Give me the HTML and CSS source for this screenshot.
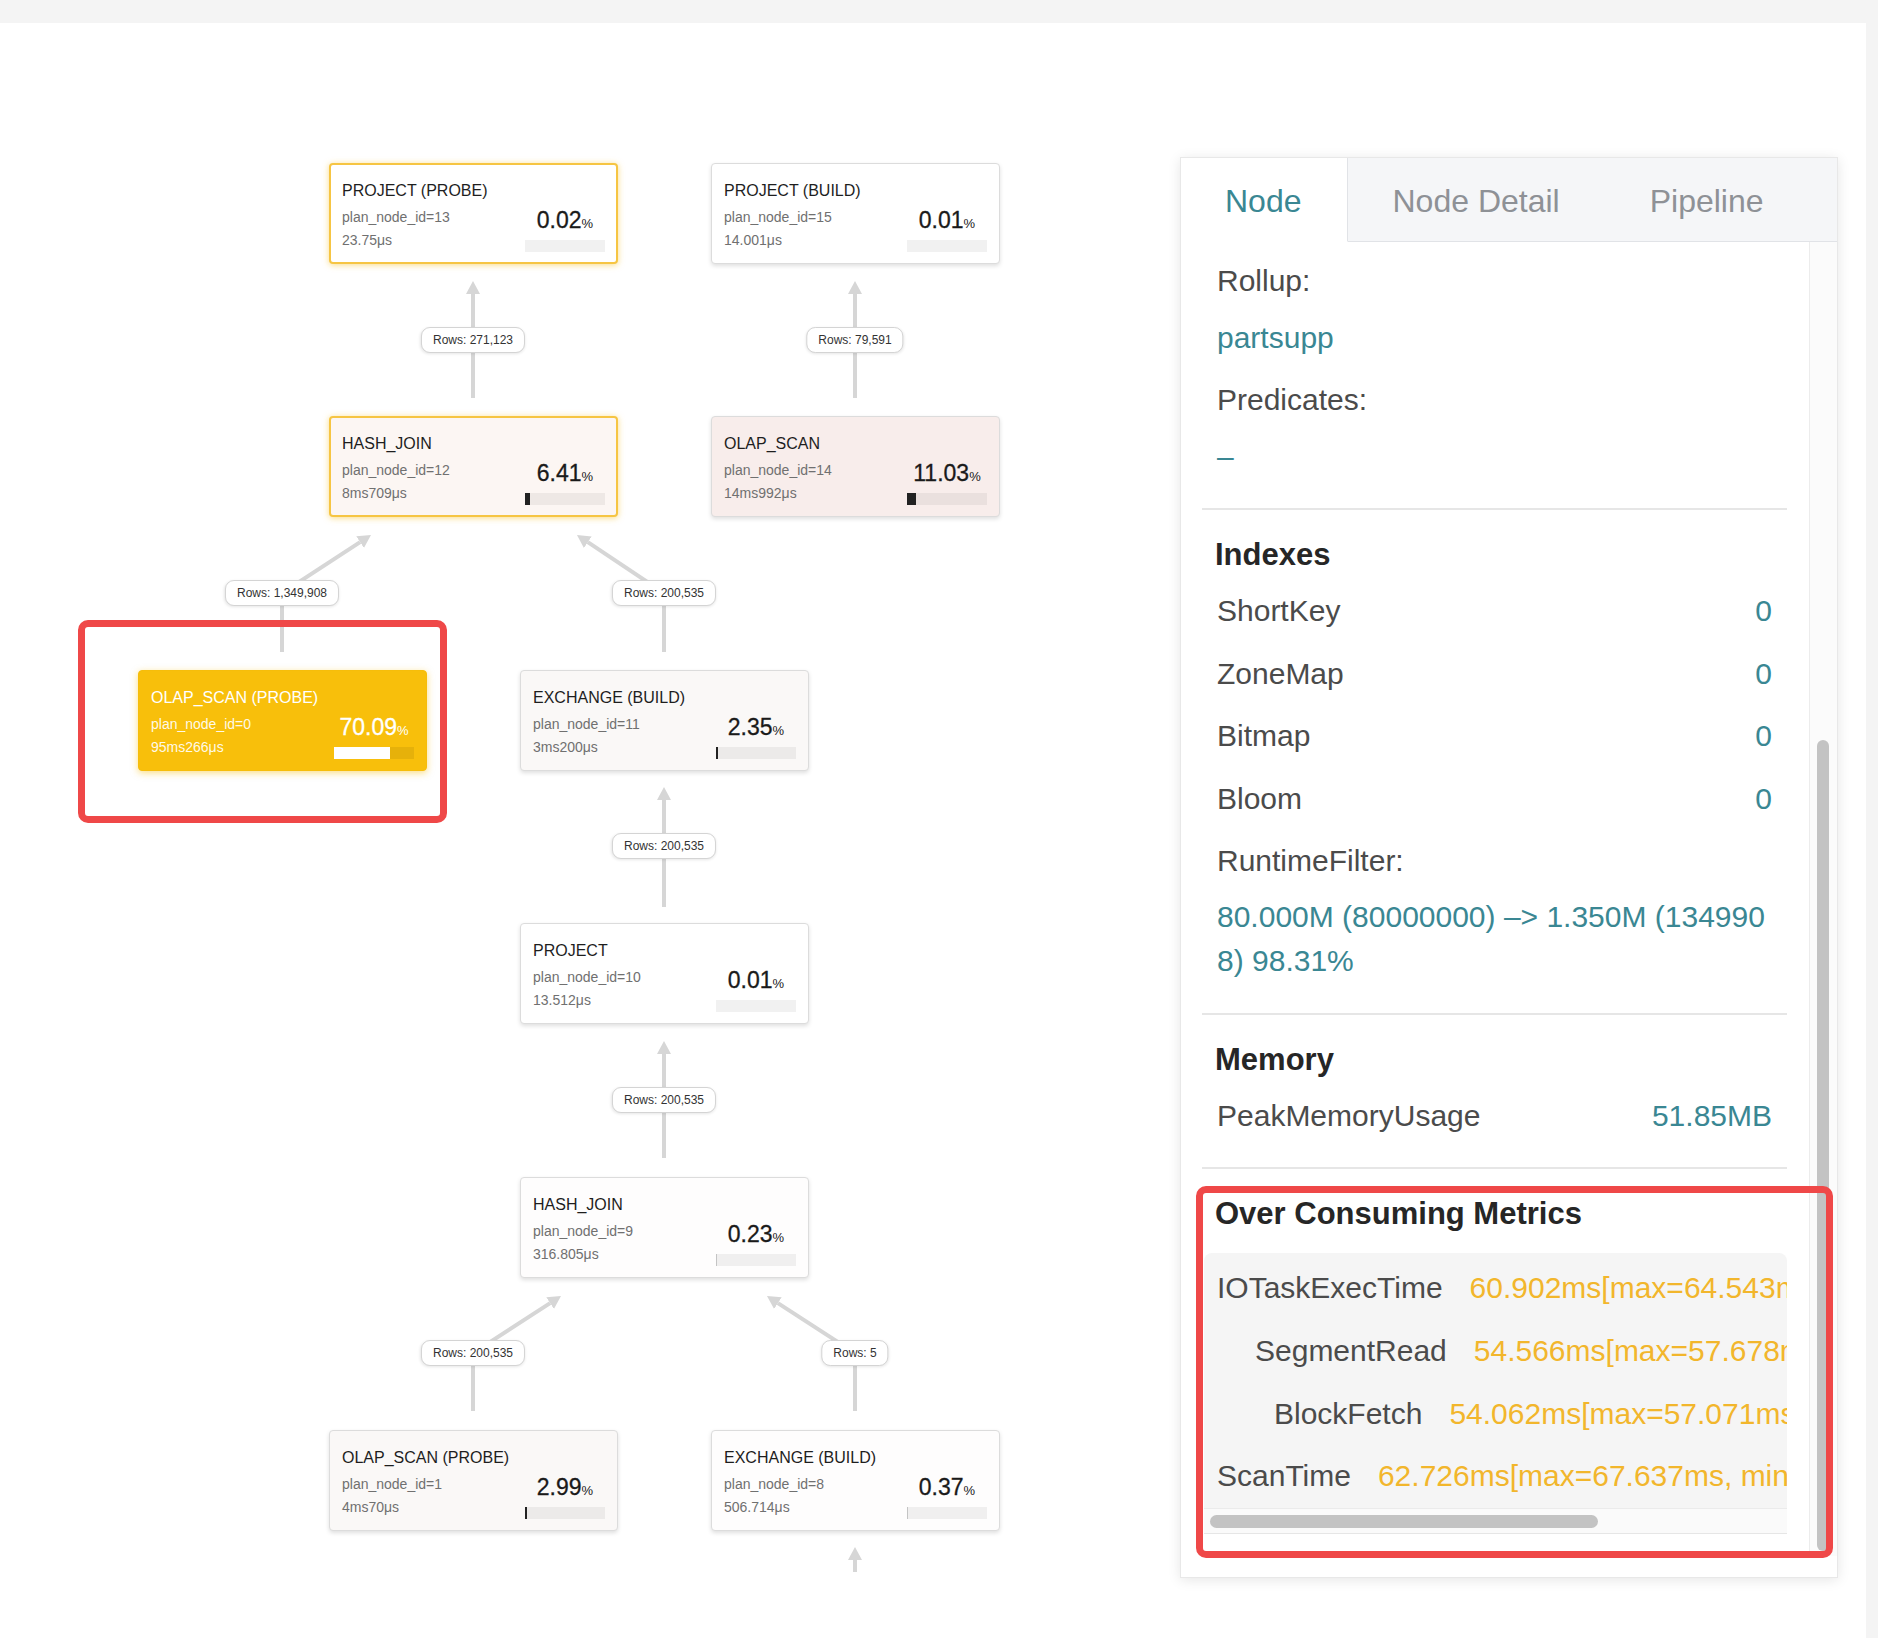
FILE: index.html
```html
<!DOCTYPE html>
<html>
<head>
<meta charset="utf-8">
<title>Profile</title>
<link rel="stylesheet" href="styles.css">
</head>
<body>
<div class="page">
  <div class="graph">
    <svg class="edges" width="1180" height="1615" viewBox="0 0 1180 1615">
      <defs>
        <marker id="arr" viewBox="0 0 13 14" refX="0" refY="7" markerWidth="13" markerHeight="14" markerUnits="userSpaceOnUse" orient="auto">
          <path d="M0,0 L13,7 L0,14 z" fill="#d6d6d6"/>
        </marker>
      </defs>
      <g fill="none" stroke="#d6d6d6" stroke-width="4" marker-end="url(#arr)">
        <path d="M473,375 L473,271"/>
        <path d="M855,375 L855,271"/>
        <path d="M282,629 L282,570 L360.1,519.1"/>
        <path d="M664,629 L664,570 L587.8,519.2"/>
        <path d="M664,884 L664,777"/>
        <path d="M664,1135 L664,1031"/>
        <path d="M473,1388 L473,1330 L550.1,1280.1"/>
        <path d="M855,1388 L855,1330 L777.9,1280.1"/>
        <path d="M855,1549 L855,1537"/>
      </g>
    </svg>

    <div class="elabel l1">Rows: 271,123</div>
    <div class="elabel l2">Rows: 79,591</div>
    <div class="elabel l3">Rows: 1,349,908</div>
    <div class="elabel l4">Rows: 200,535</div>
    <div class="elabel l5">Rows: 200,535</div>
    <div class="elabel l6">Rows: 200,535</div>
    <div class="elabel l7">Rows: 200,535</div>
    <div class="elabel l8">Rows: 5</div>

    <div class="node n13 hl">
      <div class="title">PROJECT (PROBE)</div>
      <div class="body">
        <div class="meta"><div>plan_node_id=13</div><div>23.75μs</div></div>
        <div class="stat"><div class="pct">0.02<span>%</span></div><div class="bar"></div></div>
      </div>
    </div>

    <div class="node n15">
      <div class="title">PROJECT (BUILD)</div>
      <div class="body">
        <div class="meta"><div>plan_node_id=15</div><div>14.001μs</div></div>
        <div class="stat"><div class="pct">0.01<span>%</span></div><div class="bar"></div></div>
      </div>
    </div>

    <div class="node n12 hl heat2">
      <div class="title">HASH_JOIN</div>
      <div class="body">
        <div class="meta"><div>plan_node_id=12</div><div>8ms709μs</div></div>
        <div class="stat"><div class="pct">6.41<span>%</span></div><div class="bar"><i style="width:6.41%"></i></div></div>
      </div>
    </div>

    <div class="node n14 heat3">
      <div class="title">OLAP_SCAN</div>
      <div class="body">
        <div class="meta"><div>plan_node_id=14</div><div>14ms992μs</div></div>
        <div class="stat"><div class="pct">11.03<span>%</span></div><div class="bar"><i style="width:11.03%"></i></div></div>
      </div>
    </div>

    <div class="node n0 hot">
      <div class="title">OLAP_SCAN (PROBE)</div>
      <div class="body">
        <div class="meta"><div>plan_node_id=0</div><div>95ms266μs</div></div>
        <div class="stat"><div class="pct">70.09<span>%</span></div><div class="bar"><i style="width:70.09%"></i></div></div>
      </div>
    </div>

    <div class="node n11 heat1">
      <div class="title">EXCHANGE (BUILD)</div>
      <div class="body">
        <div class="meta"><div>plan_node_id=11</div><div>3ms200μs</div></div>
        <div class="stat"><div class="pct">2.35<span>%</span></div><div class="bar"><i style="width:2.35%"></i></div></div>
      </div>
    </div>

    <div class="node n10">
      <div class="title">PROJECT</div>
      <div class="body">
        <div class="meta"><div>plan_node_id=10</div><div>13.512μs</div></div>
        <div class="stat"><div class="pct">0.01<span>%</span></div><div class="bar"></div></div>
      </div>
    </div>

    <div class="node n9 heat0">
      <div class="title">HASH_JOIN</div>
      <div class="body">
        <div class="meta"><div>plan_node_id=9</div><div>316.805μs</div></div>
        <div class="stat"><div class="pct">0.23<span>%</span></div><div class="bar"><i class="faint"></i></div></div>
      </div>
    </div>

    <div class="node n1 heat1">
      <div class="title">OLAP_SCAN (PROBE)</div>
      <div class="body">
        <div class="meta"><div>plan_node_id=1</div><div>4ms70μs</div></div>
        <div class="stat"><div class="pct">2.99<span>%</span></div><div class="bar"><i style="width:2.99%"></i></div></div>
      </div>
    </div>

    <div class="node n8 heat0">
      <div class="title">EXCHANGE (BUILD)</div>
      <div class="body">
        <div class="meta"><div>plan_node_id=8</div><div>506.714μs</div></div>
        <div class="stat"><div class="pct">0.37<span>%</span></div><div class="bar"><i class="faint"></i></div></div>
      </div>
    </div>

    <div class="redmark left-mark"></div>
  </div>

  <div class="panel">
    <div class="tabs">
      <div class="tab active">Node</div>
      <div class="tab">Node Detail</div>
      <div class="tab">Pipeline</div>
      <div class="tab-fill"></div>
    </div>
    <div class="panel-body">
      <div class="scroll">
        <div class="content">
          <section class="sec first">
            <div class="lbl">Rollup:</div>
            <div class="val">partsupp</div>
            <div class="lbl gap">Predicates:</div>
            <div class="val">–</div>
          </section>
          <section class="sec">
            <h3>Indexes</h3>
            <div class="row"><span>ShortKey</span><span class="num">0</span></div>
            <div class="row"><span>ZoneMap</span><span class="num">0</span></div>
            <div class="row"><span>Bitmap</span><span class="num">0</span></div>
            <div class="row"><span>Bloom</span><span class="num">0</span></div>
            <div class="row"><span>RuntimeFilter:</span></div>
            <div class="wrapval">80.000M (80000000) –&gt; 1.350M (1349908) 98.31%</div>
          </section>
          <section class="sec mem">
            <h3>Memory</h3>
            <div class="row"><span>PeakMemoryUsage</span><span class="num">51.85MB</span></div>
          </section>
          <section class="sec last">
            <h3>Over Consuming Metrics</h3>
            <div class="metrics">
              <div class="mrows">
                <div class="mrow"><span class="mk">IOTaskExecTime</span><span class="mv">60.902ms[max=64.543ms, min=57.261ms]</span></div>
                <div class="mrow ind1"><span class="mk">SegmentRead</span><span class="mv">54.566ms[max=57.678ms, min=51.454ms]</span></div>
                <div class="mrow ind2"><span class="mk">BlockFetch</span><span class="mv">54.062ms[max=57.071ms, min=51.053ms]</span></div>
                <div class="mrow"><span class="mk">ScanTime</span><span class="mv">62.726ms[max=67.637ms, min=57.815ms]</span></div>
              </div>
              <div class="hscroll"><div class="hthumb"></div></div>
            </div>
          </section>
        </div>
      </div>
      <div class="vscroll"><div class="vthumb"></div></div>
    </div>
    <div class="redmark right-mark"></div>
  </div>
</div>
</body>
</html>
```

FILE: styles.css
```css
html, body {
  margin: 0;
  padding: 0;
}
body {
  background: #f4f4f4;
  font-family: "Liberation Sans", Arial, Helvetica, sans-serif;
  width: 1878px;
  height: 1638px;
  overflow: hidden;
}
.page {
  margin-top: 23px;
  width: 1866px;
  height: 1615px;
  background: #fff;
  display: flex;
  align-items: flex-start;
}

/* ---------- graph canvas ---------- */
.graph {
  position: relative;
  width: 1180px;
  height: 1615px;
  flex-shrink: 0;
}
.edges {
  position: absolute;
  left: 0;
  top: 0;
}
.elabel {
  position: absolute;
  transform: translate(-50%, -50%);
  height: 24px;
  line-height: 24px;
  padding: 0 11px;
  font-size: 12px;
  color: #333;
  background: #fff;
  border: 1px solid #d4d4d4;
  border-radius: 9px;
  box-shadow: 0 1px 3px rgba(0, 0, 0, 0.1);
  white-space: nowrap;
}
.l1 { left: 473px; top: 317px; }
.l2 { left: 855px; top: 317px; }
.l3 { left: 282px; top: 570px; }
.l4 { left: 664px; top: 570px; }
.l5 { left: 664px; top: 823px; }
.l6 { left: 664px; top: 1077px; }
.l7 { left: 473px; top: 1330px; }
.l8 { left: 855px; top: 1330px; }

.node {
  position: absolute;
  width: 289px;
  height: 101px;
  box-sizing: border-box;
  padding: 17px 12px 0 12px;
  background: #fff;
  border: 1px solid #dcdcdc;
  border-radius: 4px;
  box-shadow: 0 2px 4px rgba(0, 0, 0, 0.13);
}
.n13 { left: 329px; top: 140px; }
.n15 { left: 711px; top: 140px; }
.n12 { left: 329px; top: 393px; }
.n14 { left: 711px; top: 393px; }
.n0  { left: 138px; top: 647px; }
.n11 { left: 520px; top: 647px; }
.n10 { left: 520px; top: 900px; }
.n9  { left: 520px; top: 1154px; }
.n1  { left: 329px; top: 1407px; }
.n8  { left: 711px; top: 1407px; }

.node .title {
  font-size: 16px;
  line-height: 20px;
  color: #1e1e1e;
  white-space: nowrap;
}
.node .body {
  display: flex;
  justify-content: space-between;
  margin-top: 5px;
}
.node .meta {
  font-size: 14px;
  line-height: 23px;
  color: #707070;
  white-space: nowrap;
}
.node .stat {
  width: 80px;
  display: flex;
  flex-direction: column;
  align-items: center;
}
.node .pct {
  margin-top: 1px;
  font-size: 23px;
  line-height: 27px;
  color: #1a1a1a;
  white-space: nowrap;
  -webkit-text-stroke: 0.3px #1a1a1a;
}
.node .pct span {
  font-size: 13px;
  -webkit-text-stroke: 0;
}
.node .bar {
  width: 80px;
  height: 12px;
  margin-top: 3px;
  background: rgba(0, 0, 0, 0.055);
}
.node .bar i {
  display: block;
  height: 100%;
  background: #222;
}
.node .bar i.faint {
  width: 1px;
  background: #c4c4c4;
}

.node.hl {
  border: 2px solid #f6c543;
  padding: 16px 11px 0 11px;
  box-shadow: 0 1px 6px rgba(246, 190, 30, 0.55);
}
.heat0 { background: #fefdfd; }
.heat1 { background: #faf8f7; }
.node.heat2 { background: #fcf6f3; }
.heat3 { background: #f8edeb; }

.node.hot {
  background: #f8bf0b;
  border: 1px solid #f6bd0a;
  box-shadow: 0 2px 7px rgba(248, 190, 10, 0.5);
}
.node.hot .title,
.node.hot .pct {
  color: #fff;
}
.node.hot .pct {
  -webkit-text-stroke: 0.3px #fff;
}
.node.hot .meta {
  color: rgba(255, 255, 255, 0.92);
}
.node.hot .bar {
  background: rgba(0, 0, 0, 0.07);
}
.node.hot .bar i {
  background: #fff;
}

.redmark {
  position: absolute;
  box-sizing: border-box;
  border: 7px solid #ef4848;
  border-radius: 10px;
  pointer-events: none;
}
.left-mark {
  left: 78px;
  top: 597px;
  width: 369px;
  height: 203px;
}

/* ---------- side panel ---------- */
.panel {
  position: relative;
  margin-top: 134px;
  width: 658px;
  height: 1421px;
  box-sizing: border-box;
  background: #fff;
  border: 1px solid #e8e8e8;
  box-shadow: 0 2px 12px rgba(0, 0, 0, 0.1);
  display: flex;
  flex-direction: column;
  flex-shrink: 0;
}
.tabs {
  display: flex;
  height: 84px;
  flex-shrink: 0;
  background: #f5f6f8;
}
.tab {
  padding: 3px 45px 0 45px;
  font-size: 32px;
  line-height: 80px;
  color: #8e9196;
  border-bottom: 1px solid #e1e3e7;
  white-space: nowrap;
}
.tab.active {
  background: #fff;
  color: #3a8793;
  border-bottom-color: #fff;
  border-right: 1px solid #e1e3e7;
  padding: 3px 45px 0 44px;
}
.tab-fill {
  flex: 1;
  border-bottom: 1px solid #e1e3e7;
}
.panel-body {
  flex: 1;
  display: flex;
  min-height: 0;
  padding-bottom: 21px;
}
.scroll {
  flex: 1;
  overflow: hidden;
  padding: 0 22px 0 21px;
}
.content {
  padding-top: 10px;
  font-size: 30px;
  color: #4b4b4b;
}
.sec {
  border-bottom: 2px solid #e6e6e6;
  padding: 20px 15px 0 15px;
}
.sec.first {
  padding-top: 0;
  padding-bottom: 23px;
}
.sec .lbl,
.sec .val {
  line-height: 57px;
}
.sec .lbl.gap {
  margin-top: 5px;
}
.sec .val {
  color: #3a8793;
}
.sec h3 {
  margin: 0 0 0 -2px;
  font-size: 31px;
  line-height: 50px;
  font-weight: bold;
  color: #262626;
}
.sec .row {
  display: flex;
  justify-content: space-between;
  align-items: center;
  height: 62.5px;
}
.sec .num {
  color: #3a8793;
}
.sec .wrapval {
  margin-top: 2px;
  line-height: 44px;
  color: #3a8793;
  word-break: break-all;
  padding-bottom: 30px;
}
.sec.mem {
  padding-bottom: 20px;
}
.sec.last {
  border-bottom: none;
  padding-left: 2px;
  padding-right: 0;
}
.sec.last h3 {
  margin-left: 11px;
}
.metrics {
  margin-top: 14px;
}
.mrows {
  background: #f5f5f5;
  border-radius: 8px 8px 0 0;
  padding-top: 4px;
  overflow: hidden;
}
.mrow {
  display: flex;
  align-items: center;
  gap: 27px;
  height: 62.67px;
  padding-left: 13px;
  white-space: nowrap;
}
.mrow.ind1 { padding-left: 51px; }
.mrow.ind2 { padding-left: 70px; }
.mk {
  color: #4b4b4b;
  flex-shrink: 0;
}
.mv {
  color: #f2b62c;
  flex-shrink: 0;
}
.hscroll {
  position: relative;
  height: 26px;
  box-sizing: border-box;
  background: #fafafa;
  border-top: 1px solid #ebebeb;
  border-bottom: 1px solid #e6e6e6;
}
.hthumb {
  position: absolute;
  left: 6px;
  top: 6px;
  width: 388px;
  height: 13px;
  border-radius: 7px;
  background: #c3c3c3;
}
.vscroll {
  position: relative;
  width: 28px;
  flex-shrink: 0;
  background: #fbfbfb;
  border-left: 1px solid #ececec;
  box-sizing: border-box;
}
.vthumb {
  position: absolute;
  left: 7px;
  top: 498px;
  width: 12px;
  height: 811px;
  border-radius: 6px;
  background: #c3c3c3;
}
.right-mark {
  left: 15px;
  top: 1028px;
  width: 637px;
  height: 372px;
}
```
